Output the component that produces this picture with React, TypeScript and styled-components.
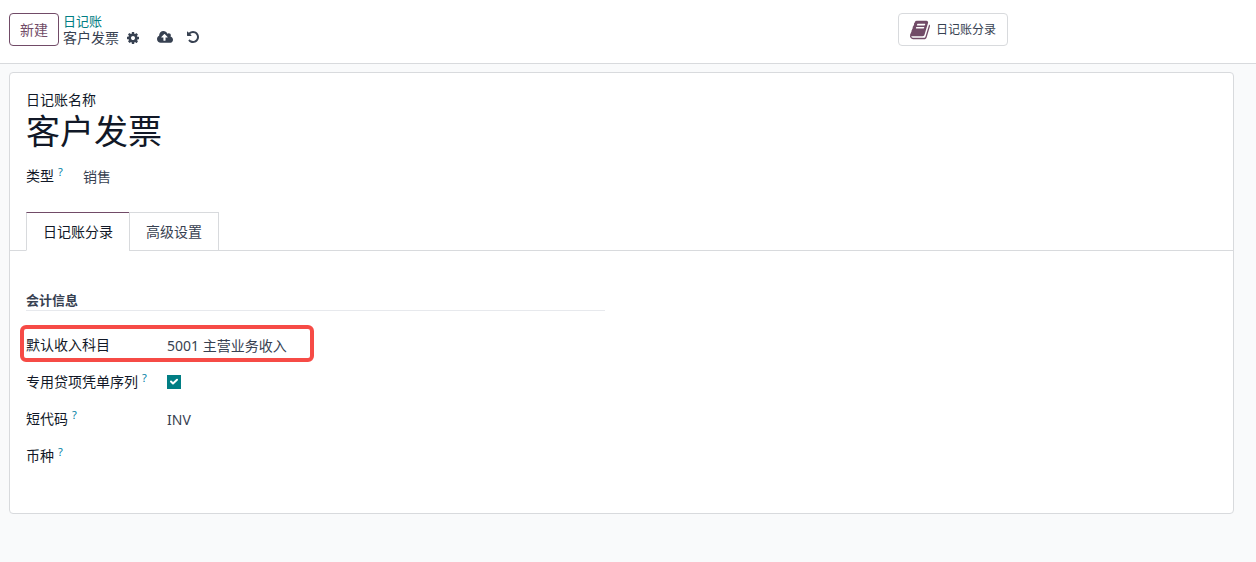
import React from "react";
import styled, { createGlobalStyle, css } from "styled-components";

const color = {
  brand: "#714b67",
  action: "#017e84",
  info: "#0180a5",
  text: "#374151",
  heading: "#111827",
  border: "#d8dadd",
  divider: "#e7e9ed",
  canvas: "#f9fafb",
  highlight: "#f64b46",
};

const GlobalStyle = createGlobalStyle`
  *, *::before, *::after { box-sizing: border-box; }
  html { min-height: 100%; background: ${color.canvas}; }
  body { margin: 0; }
  body, button, input, select {
    font-family: "Noto Sans", "Noto Sans CJK SC", sans-serif;
    font-size: 14px;
    line-height: 20px;
    color: ${color.text};
  }
`;

const ControlPanel = styled.header`
  display: grid;
  grid-template-columns: minmax(0, 1fr) 358px;
  align-items: start;
  height: 64px;
  padding-top: 13px;
  background: #fff;
  border-bottom: 1px solid ${color.border};
`;

const PanelStart = styled.div`
  display: flex;
  gap: 4px;
  padding-left: 9px;
`;

const NewButton = styled.button`
  height: 33px;
  padding: 0 10px;
  color: ${color.brand};
  background: #fff;
  border: 1px solid ${color.brand};
  border-radius: 4px;
`;

const Breadcrumb = styled.nav`
  display: flex;
  flex-direction: column;
`;

const BreadcrumbLink = styled.a`
  font-size: 13px;
  line-height: 16px;
  color: ${color.action};
  text-decoration: none;
`;

const CurrentRecord = styled.div`
  display: flex;
  align-items: center;
  line-height: 18px;
`;

const IconButton = styled.button`
  display: flex;
  margin: 0 0 0 7px;
  padding: 0;
  background: none;
  border: 0;
`;

const SaveActions = styled.div`
  display: flex;
  gap: 6px;
  margin-left: 10px;
  padding-bottom: 2px;
`;

const StatButton = styled.button`
  display: flex;
  align-items: center;
  justify-self: start;
  gap: 6px;
  height: 33px;
  padding: 0 11px;
  font-size: 12px;
  background: #fff;
  border: 1px solid ${color.border};
  border-radius: 4px;
`;

const Sheet = styled.main`
  margin: 8px 22px 48px 9px;
  padding: 16px 16px 38px;
  background: #fff;
  border: 1px solid ${color.border};
  border-radius: 4px;
`;

const labelText = css`
  color: ${color.heading};
  white-space: nowrap;
`;

const TitleLabel = styled.label`
  ${labelText}
  display: block;
  line-height: 22px;
`;

const Title = styled.h1`
  margin: 0;
  font-weight: 400;
`;

const TitleInput = styled.input`
  display: block;
  width: 100%;
  height: 40px;
  padding: 0;
  font-size: 34px;
  line-height: 40px;
  color: ${color.heading};
  background: none;
  border: 0;
`;

const TypeRow = styled.div`
  display: grid;
  grid-template-columns: 57px minmax(0, 1fr);
  margin-top: 15px;
`;

const FieldLabel = styled.label`
  ${labelText}
  display: flex;
`;

const HelpMark = styled.span`
  margin-left: 4px;
  font-size: 11px;
  line-height: 12px;
  color: ${color.info};
`;

const fieldValue = css`
  width: 100%;
  height: 20px;
  margin: 1px 0 0;
  padding: 0;
  background: none;
  border: 0;
`;

const FieldInput = styled.input`
  ${fieldValue}
`;

const FieldSelect = styled.select`
  ${fieldValue}
  appearance: none;
`;

const TabStrip = styled.div`
  display: flex;
  margin: 25px -16px 0;
  padding: 0 16px;
  border-bottom: 1px solid ${color.border};
`;

const Tab = styled.button<{ $active?: boolean }>`
  height: 39px;
  margin: 0 -1px -1px 0;
  padding: 0 16px;
  color: ${(p) => (p.$active ? color.heading : color.text)};
  background: #fff;
  border: 1px solid ${color.border};
  border-top-color: ${(p) => (p.$active ? color.brand : color.border)};
  border-bottom-color: ${(p) => (p.$active ? "#fff" : color.border)};
`;

const TabPage = styled.div`
  display: grid;
  grid-template-columns: minmax(0, 1fr) minmax(0, 1fr);
  column-gap: 33px;
  padding-top: 40px;
`;

const GroupTitle = styled.h2`
  margin: 0 0 16px;
  font-size: 13px;
  line-height: 19px;
  font-weight: 700;
  border-bottom: 1px solid ${color.divider};
`;

const FieldRow = styled.div`
  position: relative;
  display: grid;
  grid-template-columns: 141px minmax(0, 1fr);
  height: 37px;
  padding-top: 8px;
`;

const Highlight = styled.span`
  position: absolute;
  top: -2px;
  left: -6px;
  width: 294px;
  height: 37px;
  border: 4px solid ${color.highlight};
  border-radius: 6px;
  pointer-events: none;
`;

const CheckWrap = styled.span`
  position: relative;
  width: 14px;
  height: 14px;
  margin-top: 3px;
`;

const Checkbox = styled.input`
  display: block;
  appearance: none;
  width: 14px;
  height: 14px;
  margin: 0;
  background: #fff;
  border: 1px solid ${color.border};
  &:checked {
    background: ${color.action};
    border-color: ${color.action};
  }
  & + svg { display: none; }
  &:checked + svg { display: block; }
`;

const CheckMark = styled.svg`
  position: absolute;
  inset: 0;
  pointer-events: none;
`;

function Icon({ d, viewBox, width, height, fill = color.text }: { d: string; viewBox: string; width: number; height: number; fill?: string }) {
  return (
    <svg width={width} height={height} viewBox={viewBox} fill={fill} aria-hidden="true">
      <path d={d} />
    </svg>
  );
}

const cog =
  "M1152 896q0-106-75-181t-181-75-181 75-75 181 75 181 181 75 181-75 75-181zm512-109v222q0 12-8 23t-20 13l-185 28q-19 54-39 91 35 50 107 138 10 12 10 25t-9 23q-27 37-99 108t-94 71q-12 0-26-9l-138-108q-44 23-91 38-16 136-29 186-7 28-36 28h-222q-14 0-24.5-8.5t-11.5-21.5l-28-184q-49-16-90-37l-141 107q-10 9-25 9-14 0-25-11-126-114-165-168-7-10-7-23 0-12 8-23 15-21 51-66.5t54-70.5q-27-50-41-99l-183-27q-13-2-21-12.5t-8-23.5v-222q0-12 8-23t19-13l186-28q14-46 39-92-40-57-107-138-10-12-10-24 0-10 9-23 26-36 98.5-107.5t94.5-71.5q13 0 26 10l138 107q44-23 91-38 16-136 29-186 7-28 36-28h222q14 0 24.5 8.5t11.5 21.5l28 184q49 16 90 37l142-107q9-9 24-9 13 0 25 10 129 119 165 170 7 8 7 22 0 12-8 23-15 21-51 66.5t-54 70.5q26 50 41 98l183 28q13 2 21 12.5t8 23.5z";
const cloudUpload =
  "M1216 864q0-14-9-23l-352-352q-9-9-23-9t-23 9l-351 351q-10 12-10 24 0 14 9 23t23 9h224v352q0 13 9.5 22.5t22.5 9.5h192q13 0 22.5-9.5t9.5-22.5v-352h224q13 0 22.5-9.5t9.5-22.5zm640 288q0 159-112.5 271.5t-271.5 112.5h-1088q-185 0-316.5-131.5t-131.5-316.5q0-130 70-240t188-165q-2-30-2-43 0-212 150-362t362-150q156 0 285.5 87t188.5 231q71-62 166-62 106 0 181 75t75 181q0 76-41 138 130 31 213.5 135.5t83.5 238.5z";
const undo =
  "M1664 896q0 156-61 298t-164 245-245 164-298 61q-172 0-327-72.5t-264-204.5q-7-10-6.5-22.5t8.5-20.5l137-138q10-9 25-9 16 2 23 12 73 95 179 147t225 52q104 0 198.5-40.5t163.5-109.5 109.5-163.5 40.5-198.5-40.5-198.5-109.5-163.5-163.5-109.5-198.5-40.5q-98 0-188 35.5t-160 101.5l137 138q31 30 14 69-17 40-59 40h-448q-26 0-45-19t-19-45v-448q0-42 40-59 39-17 69 14l130 129q107-101 244.5-156.5t284.5-55.5q156 0 298 61t245 164 164 245 61 298z";
const book =
  "M1639 478q40 57 18 129l-275 906q-19 64-76.5 107.5t-122.5 43.5h-923q-77 0-148.5-53.5t-99.5-131.5q-24-67-2-127 0-4 3-27t4-37q1-8-3-21.5t-3-19.5q2-11 8-21t16.5-23.5 16.5-23.5q23-38 45-91.5t30-91.5q3-10 .5-30t-.5-28q3-11 17-28t17-23q21-36 42-92t25-90q1-9-2.5-32t.5-28q4-13 22-30.5t22-22.5q19-26 42.5-84.5t27.5-96.5q1-8-3-25.5t-2-26.5q2-8 9-18t18-23 17-21q8-12 16.5-30.5t15-35 16-36 19.5-32 26.5-23.5 36-11.5 47.5 5.5l-1 3q38-9 51-9h761q74 0 114 56t18 130l-274 906q-36 119-71.5 153.5t-128.5 34.5h-869q-27 0-38 15-11 16-1 43 24 70 144 70h923q29 0 56-15.5t35-41.5l300-987q7-22 5-57 38 15 59 43zm-1064 2q-4 13 2 22.5t20 9.5h608q13 0 25.5-9.5t16.5-22.5l21-64q4-13-2-22.5t-20-9.5h-608q-13 0-25.5 9.5t-16.5 22.5zm-83 256q-4 13 2 22.5t20 9.5h608q13 0 25.5-9.5t16.5-22.5l21-64q4-13-2-22.5t-20-9.5h-608q-13 0-25.5 9.5t-16.5 22.5z";

export default function App() {
  return (
    <>
      <GlobalStyle />
      <ControlPanel>
        <PanelStart>
          <NewButton type="button">新建</NewButton>
          <Breadcrumb>
            <BreadcrumbLink href="#journals">日记账</BreadcrumbLink>
            <CurrentRecord>
              <span>客户发票</span>
              <IconButton type="button" aria-label="操作">
                <Icon d={cog} viewBox="0 0 1792 1792" width={14} height={14} />
              </IconButton>
              <SaveActions>
                <IconButton type="button" aria-label="保存">
                  <Icon d={cloudUpload} viewBox="-64 0 1920 1792" width={16} height={15} />
                </IconButton>
                <IconButton type="button" aria-label="放弃">
                  <Icon d={undo} viewBox="0 0 1792 1792" width={14} height={14} />
                </IconButton>
              </SaveActions>
            </CurrentRecord>
          </Breadcrumb>
        </PanelStart>
        <StatButton type="button">
          <Icon d={book} viewBox="0 0 1664 1792" width={20} height={22} fill={color.brand} />
          日记账分录
        </StatButton>
      </ControlPanel>

      <Sheet>
        <TitleLabel htmlFor="name">日记账名称</TitleLabel>
        <Title>
          <TitleInput id="name" defaultValue="客户发票" />
        </Title>
        <TypeRow>
          <FieldLabel htmlFor="type">
            类型<HelpMark>?</HelpMark>
          </FieldLabel>
          <FieldSelect id="type" defaultValue="sale">
            <option value="sale">销售</option>
          </FieldSelect>
        </TypeRow>

        <TabStrip role="tablist">
          <Tab type="button" role="tab" aria-selected="true" $active>
            日记账分录
          </Tab>
          <Tab type="button" role="tab" aria-selected="false">
            高级设置
          </Tab>
        </TabStrip>

        <TabPage role="tabpanel">
          <section>
            <GroupTitle>会计信息</GroupTitle>
            <FieldRow>
              <FieldLabel htmlFor="account">默认收入科目</FieldLabel>
              <FieldInput id="account" defaultValue="5001 主营业务收入" />
              <Highlight />
            </FieldRow>
            <FieldRow>
              <FieldLabel htmlFor="sequence">
                专用贷项凭单序列<HelpMark>?</HelpMark>
              </FieldLabel>
              <CheckWrap>
                <Checkbox id="sequence" type="checkbox" defaultChecked />
                <CheckMark width="14" height="14" viewBox="0 0 14 14" fill="none" stroke="#fff" strokeWidth="2">
                  <path d="M4 6.500l2 2 4-3.700" strokeLinecap="round" strokeLinejoin="round" />
                </CheckMark>
              </CheckWrap>
            </FieldRow>
            <FieldRow>
              <FieldLabel htmlFor="code">
                短代码<HelpMark>?</HelpMark>
              </FieldLabel>
              <FieldInput id="code" defaultValue="INV" />
            </FieldRow>
            <FieldRow>
              <FieldLabel htmlFor="currency">
                币种<HelpMark>?</HelpMark>
              </FieldLabel>
              <FieldInput id="currency" />
            </FieldRow>
          </section>
        </TabPage>
      </Sheet>
    </>
  );
}
